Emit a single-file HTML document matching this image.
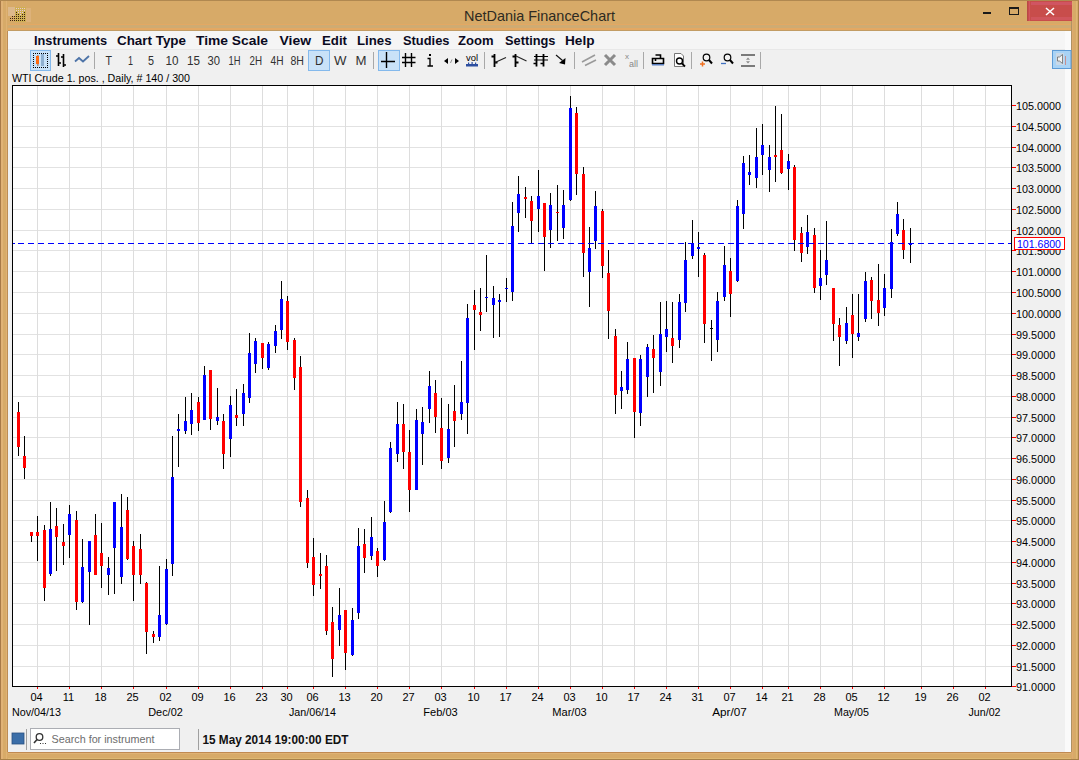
<!DOCTYPE html><html><head><meta charset="utf-8"><style>html,body{margin:0;padding:0;width:1079px;height:760px;overflow:hidden;background:#D7AA68}svg{display:block}text{font-family:"Liberation Sans",sans-serif}</style></head><body><svg width="1079" height="760" viewBox="0 0 1079 760"><rect x="0" y="0" width="1079" height="760" fill="#D7AA68"/><rect x="0" y="0" width="1" height="760" fill="#A87A48"/><rect x="1" y="0" width="2" height="760" fill="#E0B276"/><rect x="6" y="0" width="1" height="760" fill="#DFB274"/><rect x="7" y="31" width="1" height="721" fill="#BC8C55"/><rect x="1071" y="21" width="1" height="731" fill="#AE9262"/><rect x="1072" y="0" width="1" height="760" fill="#DEAA70"/><rect x="1076" y="0" width="1" height="760" fill="#DDB872"/><rect x="1078" y="0" width="1" height="760" fill="#A88048"/><rect x="0" y="0" width="1079" height="1" fill="#B08850"/><rect x="8" y="753" width="1063" height="1" fill="#DFB274"/><rect x="8" y="758" width="1063" height="1" fill="#DDB872"/><rect x="0" y="759" width="1079" height="1" fill="#A88048"/><rect x="8" y="24" width="1063" height="1" fill="#E4A862"/><rect x="8" y="25" width="1063" height="3" fill="#CFAB72"/><rect x="8" y="28" width="1063" height="2" fill="#E4A862"/><rect x="8" y="30" width="1063" height="1" fill="#C29C64"/><rect x="8" y="752" width="1063" height="1" fill="#C08A52"/><rect x="8" y="7" width="8" height="9" fill="#DDB98C"/><rect x="15" y="7" width="11" height="15" fill="#CFB055"/><rect x="26" y="8" width="5" height="14" fill="#DDB27A"/><rect x="10" y="18" width="1" height="1" fill="#3A2410"/><rect x="10" y="20" width="1" height="1" fill="#3A2410"/><rect x="12" y="16" width="1" height="1" fill="#3A2410"/><rect x="12" y="18" width="1" height="1" fill="#3A2410"/><rect x="12" y="20" width="1" height="1" fill="#3A2410"/><rect x="14" y="16" width="1" height="1" fill="#3A2410"/><rect x="14" y="18" width="1" height="1" fill="#3A2410"/><rect x="14" y="20" width="1" height="1" fill="#3A2410"/><rect x="16" y="12" width="1" height="1" fill="#3A2410"/><rect x="16" y="14" width="1" height="1" fill="#3A2410"/><rect x="16" y="16" width="1" height="1" fill="#3A2410"/><rect x="16" y="18" width="1" height="1" fill="#3A2410"/><rect x="16" y="20" width="1" height="1" fill="#3A2410"/><rect x="18" y="14" width="1" height="1" fill="#3A2410"/><rect x="18" y="16" width="1" height="1" fill="#3A2410"/><rect x="18" y="18" width="1" height="1" fill="#3A2410"/><rect x="18" y="20" width="1" height="1" fill="#3A2410"/><rect x="20" y="16" width="1" height="1" fill="#3A2410"/><rect x="20" y="18" width="1" height="1" fill="#3A2410"/><rect x="20" y="20" width="1" height="1" fill="#3A2410"/><rect x="22" y="14" width="1" height="1" fill="#3A2410"/><rect x="22" y="16" width="1" height="1" fill="#3A2410"/><rect x="22" y="18" width="1" height="1" fill="#3A2410"/><rect x="22" y="20" width="1" height="1" fill="#3A2410"/><rect x="24" y="12" width="1" height="1" fill="#3A2410"/><rect x="24" y="14" width="1" height="1" fill="#3A2410"/><rect x="24" y="16" width="1" height="1" fill="#3A2410"/><rect x="24" y="18" width="1" height="1" fill="#3A2410"/><rect x="24" y="20" width="1" height="1" fill="#3A2410"/><rect x="16" y="8" width="1" height="1" fill="#E8C8D8"/><rect x="16" y="10" width="1" height="1" fill="#E8C8D8"/><rect x="18" y="8" width="1" height="1" fill="#E8C8D8"/><rect x="18" y="10" width="1" height="1" fill="#E8C8D8"/><rect x="18" y="12" width="1" height="1" fill="#E8C8D8"/><rect x="20" y="8" width="1" height="1" fill="#E8C8D8"/><rect x="20" y="10" width="1" height="1" fill="#E8C8D8"/><rect x="20" y="12" width="1" height="1" fill="#E8C8D8"/><rect x="20" y="14" width="1" height="1" fill="#E8C8D8"/><rect x="22" y="8" width="1" height="1" fill="#E8C8D8"/><rect x="22" y="10" width="1" height="1" fill="#E8C8D8"/><rect x="22" y="12" width="1" height="1" fill="#E8C8D8"/><rect x="24" y="8" width="1" height="1" fill="#E8C8D8"/><rect x="24" y="10" width="1" height="1" fill="#E8C8D8"/><text x="539.5" y="20.5" font-size="14.5" fill="#2E2A22" text-anchor="middle" textLength="151" lengthAdjust="spacingAndGlyphs">NetDania FinanceChart</text><rect x="983" y="12" width="8" height="2" fill="#1a1a1a"/><rect x="1009.5" y="7.5" width="9" height="7" fill="none" stroke="#1a1a1a" stroke-width="1"/><rect x="1009" y="7" width="10" height="2" fill="#1a1a1a"/><rect x="1027" y="1" width="45" height="20" fill="#C84D4B"/><rect x="1031" y="2" width="41" height="3" fill="#D05562"/><rect x="1031" y="17" width="41" height="3" fill="#D0555C"/><rect x="1027" y="1" width="1" height="20" fill="#B84848"/><rect x="1029" y="1" width="1" height="20" fill="#D25660"/><path d="M1046 8 L1054 15 M1054 8 L1046 15" stroke="#fff" stroke-width="1.6"/><rect x="8" y="31" width="1063" height="721" fill="#F0F0F0"/><rect x="8" y="31" width="1057" height="18" fill="#F5F5F5"/><rect x="1065" y="31" width="6" height="721" fill="#FAFAFA"/><rect x="8" y="49" width="1057" height="1" fill="#E8E8E8"/><text x="34" y="45" font-size="13" font-weight="bold" fill="#0A0A1E" textLength="73" lengthAdjust="spacingAndGlyphs">Instruments</text><text x="117" y="45" font-size="13" font-weight="bold" fill="#0A0A1E" textLength="69" lengthAdjust="spacingAndGlyphs">Chart Type</text><text x="196" y="45" font-size="13" font-weight="bold" fill="#0A0A1E" textLength="72" lengthAdjust="spacingAndGlyphs">Time Scale</text><text x="279.5" y="45" font-size="13" font-weight="bold" fill="#0A0A1E" textLength="31.5" lengthAdjust="spacingAndGlyphs">View</text><text x="322" y="45" font-size="13" font-weight="bold" fill="#0A0A1E" textLength="25" lengthAdjust="spacingAndGlyphs">Edit</text><text x="357" y="45" font-size="13" font-weight="bold" fill="#0A0A1E" textLength="34.5" lengthAdjust="spacingAndGlyphs">Lines</text><text x="403" y="45" font-size="13" font-weight="bold" fill="#0A0A1E" textLength="46.5" lengthAdjust="spacingAndGlyphs">Studies</text><text x="458" y="45" font-size="13" font-weight="bold" fill="#0A0A1E" textLength="35.5" lengthAdjust="spacingAndGlyphs">Zoom</text><text x="505" y="45" font-size="13" font-weight="bold" fill="#0A0A1E" textLength="50.5" lengthAdjust="spacingAndGlyphs">Settings</text><text x="565" y="45" font-size="13" font-weight="bold" fill="#0A0A1E" textLength="29.5" lengthAdjust="spacingAndGlyphs">Help</text><rect x="30.5" y="50.5" width="20" height="20" fill="#C9E2F8" stroke="#84B9EC" stroke-width="1"/><rect x="33" y="53" width="1" height="1" fill="#000"/><rect x="33" y="67" width="1" height="1" fill="#000"/><rect x="33" y="53" width="1" height="1" fill="#000"/><rect x="47" y="53" width="1" height="1" fill="#000"/><rect x="35" y="53" width="1" height="1" fill="#000"/><rect x="35" y="67" width="1" height="1" fill="#000"/><rect x="33" y="55" width="1" height="1" fill="#000"/><rect x="47" y="55" width="1" height="1" fill="#000"/><rect x="37" y="53" width="1" height="1" fill="#000"/><rect x="37" y="67" width="1" height="1" fill="#000"/><rect x="33" y="57" width="1" height="1" fill="#000"/><rect x="47" y="57" width="1" height="1" fill="#000"/><rect x="39" y="53" width="1" height="1" fill="#000"/><rect x="39" y="67" width="1" height="1" fill="#000"/><rect x="33" y="59" width="1" height="1" fill="#000"/><rect x="47" y="59" width="1" height="1" fill="#000"/><rect x="41" y="53" width="1" height="1" fill="#000"/><rect x="41" y="67" width="1" height="1" fill="#000"/><rect x="33" y="61" width="1" height="1" fill="#000"/><rect x="47" y="61" width="1" height="1" fill="#000"/><rect x="43" y="53" width="1" height="1" fill="#000"/><rect x="43" y="67" width="1" height="1" fill="#000"/><rect x="33" y="63" width="1" height="1" fill="#000"/><rect x="47" y="63" width="1" height="1" fill="#000"/><rect x="45" y="53" width="1" height="1" fill="#000"/><rect x="45" y="67" width="1" height="1" fill="#000"/><rect x="33" y="65" width="1" height="1" fill="#000"/><rect x="47" y="65" width="1" height="1" fill="#000"/><rect x="47" y="53" width="1" height="1" fill="#000"/><rect x="47" y="67" width="1" height="1" fill="#000"/><rect x="33" y="67" width="1" height="1" fill="#000"/><rect x="47" y="67" width="1" height="1" fill="#000"/><rect x="37.5" y="55" width="0.8" height="11" fill="#8a3a10"/><rect x="36" y="56" width="3" height="8" fill="#FF6A10"/><rect x="41" y="54" width="3" height="12" fill="#8FB0D0"/><path d="M58.5 53 V66 M63.5 54 V67 M56 56 H58.5 M58.5 63 H61 M61 57 H63.5 M63.5 65 H66" stroke="#000" stroke-width="1.6" fill="none"/><path d="M75 61.5 L79 58 L83 61.5 L89 56" stroke="#4E74A8" stroke-width="1.8" fill="none"/><rect x="94" y="52" width="1" height="17" fill="#A8A8A8"/><rect x="308.5" y="50.5" width="21" height="20" fill="#C9E2F8" stroke="#84B9EC" stroke-width="1"/><text x="105.5" y="64.5" font-size="12.5" fill="#303030" textLength="6.5" lengthAdjust="spacingAndGlyphs">T</text><text x="128" y="64.5" font-size="12.5" fill="#303030" textLength="5" lengthAdjust="spacingAndGlyphs">1</text><text x="148" y="64.5" font-size="12.5" fill="#303030" textLength="6" lengthAdjust="spacingAndGlyphs">5</text><text x="165.5" y="64.5" font-size="12.5" fill="#303030" textLength="13" lengthAdjust="spacingAndGlyphs">10</text><text x="187" y="64.5" font-size="12.5" fill="#303030" textLength="13" lengthAdjust="spacingAndGlyphs">15</text><text x="207.5" y="64.5" font-size="12.5" fill="#303030" textLength="12.5" lengthAdjust="spacingAndGlyphs">30</text><text x="228.5" y="64.5" font-size="12.5" fill="#303030" textLength="12" lengthAdjust="spacingAndGlyphs">1H</text><text x="249.5" y="64.5" font-size="12.5" fill="#303030" textLength="12.5" lengthAdjust="spacingAndGlyphs">2H</text><text x="270.5" y="64.5" font-size="12.5" fill="#303030" textLength="13" lengthAdjust="spacingAndGlyphs">4H</text><text x="290.5" y="64.5" font-size="12.5" fill="#303030" textLength="13.5" lengthAdjust="spacingAndGlyphs">8H</text><text x="315" y="64.5" font-size="12.5" fill="#303030" textLength="8.5" lengthAdjust="spacingAndGlyphs">D</text><text x="334" y="64.5" font-size="12.5" fill="#303030" textLength="12.5" lengthAdjust="spacingAndGlyphs">W</text><text x="355.5" y="64.5" font-size="12.5" fill="#303030" textLength="11" lengthAdjust="spacingAndGlyphs">M</text><rect x="373" y="52" width="1" height="17" fill="#A8A8A8"/><rect x="378.5" y="50.5" width="21" height="20" fill="#C9E2F8" stroke="#84B9EC" stroke-width="1"/><path d="M381 61.5 H395 M386.5 52 V68" stroke="#000" stroke-width="1.4"/><path d="M405.5 53 V67 M411.5 53 V67 M402 57.5 H415.5 M402 62.5 H415.5" stroke="#000" stroke-width="1.4"/><rect x="429" y="54" width="2" height="2" fill="#000"/><path d="M427.5 58.5 H430 V66 M427.5 66 H433" stroke="#000" stroke-width="1.4" fill="none"/><path d="M444 61 L448 58 L448 64 Z M459 61 L455 58 L455 64 Z" fill="#000"/><path d="M450.5 63 L452 59.5" stroke="#777" stroke-width="0.8"/><text x="466" y="61" font-size="9.5" fill="#000" textLength="12" lengthAdjust="spacingAndGlyphs">vol</text><rect x="466" y="64" width="12" height="2.5" fill="#2D4FA0"/><rect x="468" y="62.5" width="1.2" height="1.5" fill="#2D4FA0"/><rect x="471.5" y="62" width="1.2" height="2" fill="#2D4FA0"/><rect x="475" y="62.5" width="1.2" height="1.5" fill="#2D4FA0"/><rect x="484" y="52" width="1" height="17" fill="#A8A8A8"/><path d="M494.5 54 V67 M491.5 56.5 H494.5 M494.5 62.5 H497.5 M536.5 54 V66.5 M543.5 54 V66.5" stroke="#000" stroke-width="1.8" fill="none"/><path d="M495 62.5 L506 57.5" stroke="#222" stroke-width="1.1" fill="none"/><path d="M515.5 54 V67 M512.5 56.5 H515.5 M515.5 62.5 H518.5" stroke="#000" stroke-width="1.8" fill="none"/><path d="M516 56 L526.5 61" stroke="#222" stroke-width="1.1" fill="none"/><path d="M534 56.5 H548 M534 60 H548" stroke="#000" stroke-width="1.2" fill="none"/><path d="M533.5 63.5 H536.5 M540.5 63.5 H543.5" stroke="#000" stroke-width="1.5" fill="none"/><path d="M556 55 L562.5 60.5" stroke="#111" stroke-width="1.1"/><path d="M565.5 58 L565 64.5 L559 63 Z" fill="#000"/><rect x="574" y="52" width="1" height="17" fill="#A8A8A8"/><path d="M582 62 L595 55 M585 65.5 L596 60" stroke="#9A9A9A" stroke-width="1.6"/><path d="M605 55 L615 65 M615 55 L605 65" stroke="#8A8A8A" stroke-width="3"/><text x="625" y="59" font-size="8" fill="#888">x</text><text x="629" y="66.5" font-size="9" fill="#888">all</text><rect x="643" y="52" width="1" height="17" fill="#A8A8A8"/><path d="M652.5 58.5 H663.5 V63.5 H652.5 Z M655.5 55 H660.5 V58.5 M655.5 58.5 V61" stroke="#000" stroke-width="1.6" fill="none"/><rect x="652" y="64" width="12" height="1.5" fill="#5A7EC0"/><path d="M674.5 53.5 H681 L683.5 56 V66.5 H674.5 Z" stroke="#777" stroke-width="1" fill="#fff"/><circle cx="679.5" cy="61" r="3" stroke="#000" stroke-width="1.4" fill="none"/><path d="M681.8 63.3 L685 66.5" stroke="#000" stroke-width="1.8"/><rect x="691" y="52" width="1" height="17" fill="#A8A8A8"/><circle cx="706.5" cy="57.5" r="3.3" stroke="#000" stroke-width="1.2" fill="none"/><path d="M709 60 L712 63.5" stroke="#000" stroke-width="2"/><path d="M700 64 H705 M702.5 61.5 V66.5" stroke="#F07020" stroke-width="1.5"/><circle cx="727.5" cy="57.5" r="3.3" stroke="#000" stroke-width="1.2" fill="none"/><path d="M730 60 L733 63.5" stroke="#000" stroke-width="2"/><path d="M721 63.5 H726" stroke="#4070C0" stroke-width="1.3"/><path d="M741 55 H755 M741 66 H755" stroke="#7A7A7A" stroke-width="1.8"/><path d="M748 57.5 L746 59.8 H750 Z M748 63.5 L746 61.2 H750 Z" fill="#8A8A8A"/><rect x="760" y="52" width="1" height="17" fill="#A8A8A8"/><rect x="1052.5" y="50.5" width="18.5" height="18" fill="#A9D3F5" stroke="#5C9BD6" stroke-width="1"/><rect x="1056" y="53" width="8" height="12" fill="#C9D9E8"/><path d="M1057.5 57 H1059.5 L1062.5 54.5 V63.5 L1059.5 61 H1057.5 Z" fill="#F4F4F4" stroke="#6A6A6A" stroke-width="0.8"/><rect x="1065" y="56" width="1" height="9" fill="#C89090"/><text x="12" y="81.5" font-size="11" fill="#000" textLength="178" lengthAdjust="spacingAndGlyphs">WTI Crude 1. pos. , Daily, # 140 / 300</text><rect x="12" y="85" width="999" height="601" fill="#FFFFFF"/><rect x="13" y="105" width="998" height="1" fill="#E2E2E2"/><rect x="13" y="126" width="998" height="1" fill="#E2E2E2"/><rect x="13" y="147" width="998" height="1" fill="#E2E2E2"/><rect x="13" y="167" width="998" height="1" fill="#E2E2E2"/><rect x="13" y="188" width="998" height="1" fill="#E2E2E2"/><rect x="13" y="209" width="998" height="1" fill="#E2E2E2"/><rect x="13" y="230" width="998" height="1" fill="#E2E2E2"/><rect x="13" y="250" width="998" height="1" fill="#E2E2E2"/><rect x="13" y="271" width="998" height="1" fill="#E2E2E2"/><rect x="13" y="292" width="998" height="1" fill="#E2E2E2"/><rect x="13" y="313" width="998" height="1" fill="#E2E2E2"/><rect x="13" y="334" width="998" height="1" fill="#E2E2E2"/><rect x="13" y="354" width="998" height="1" fill="#E2E2E2"/><rect x="13" y="375" width="998" height="1" fill="#E2E2E2"/><rect x="13" y="396" width="998" height="1" fill="#E2E2E2"/><rect x="13" y="417" width="998" height="1" fill="#E2E2E2"/><rect x="13" y="437" width="998" height="1" fill="#E2E2E2"/><rect x="13" y="458" width="998" height="1" fill="#E2E2E2"/><rect x="13" y="479" width="998" height="1" fill="#E2E2E2"/><rect x="13" y="500" width="998" height="1" fill="#E2E2E2"/><rect x="13" y="520" width="998" height="1" fill="#E2E2E2"/><rect x="13" y="541" width="998" height="1" fill="#E2E2E2"/><rect x="13" y="562" width="998" height="1" fill="#E2E2E2"/><rect x="13" y="583" width="998" height="1" fill="#E2E2E2"/><rect x="13" y="603" width="998" height="1" fill="#E2E2E2"/><rect x="13" y="624" width="998" height="1" fill="#E2E2E2"/><rect x="13" y="645" width="998" height="1" fill="#E2E2E2"/><rect x="13" y="666" width="998" height="1" fill="#E2E2E2"/><rect x="37" y="86" width="1" height="600" fill="#DDDDDD"/><rect x="69" y="86" width="1" height="600" fill="#DDDDDD"/><rect x="101" y="86" width="1" height="600" fill="#DDDDDD"/><rect x="133" y="86" width="1" height="600" fill="#DDDDDD"/><rect x="166" y="86" width="1" height="600" fill="#DDDDDD"/><rect x="198" y="86" width="1" height="600" fill="#DDDDDD"/><rect x="230" y="86" width="1" height="600" fill="#DDDDDD"/><rect x="262" y="86" width="1" height="600" fill="#DDDDDD"/><rect x="287" y="86" width="1" height="600" fill="#DDDDDD"/><rect x="313" y="86" width="1" height="600" fill="#DDDDDD"/><rect x="345" y="86" width="1" height="600" fill="#DDDDDD"/><rect x="377" y="86" width="1" height="600" fill="#DDDDDD"/><rect x="409" y="86" width="1" height="600" fill="#DDDDDD"/><rect x="441" y="86" width="1" height="600" fill="#DDDDDD"/><rect x="474" y="86" width="1" height="600" fill="#DDDDDD"/><rect x="506" y="86" width="1" height="600" fill="#DDDDDD"/><rect x="538" y="86" width="1" height="600" fill="#DDDDDD"/><rect x="570" y="86" width="1" height="600" fill="#DDDDDD"/><rect x="602" y="86" width="1" height="600" fill="#DDDDDD"/><rect x="634" y="86" width="1" height="600" fill="#DDDDDD"/><rect x="666" y="86" width="1" height="600" fill="#DDDDDD"/><rect x="698" y="86" width="1" height="600" fill="#DDDDDD"/><rect x="730" y="86" width="1" height="600" fill="#DDDDDD"/><rect x="762" y="86" width="1" height="600" fill="#DDDDDD"/><rect x="788" y="86" width="1" height="600" fill="#DDDDDD"/><rect x="820" y="86" width="1" height="600" fill="#DDDDDD"/><rect x="852" y="86" width="1" height="600" fill="#DDDDDD"/><rect x="884" y="86" width="1" height="600" fill="#DDDDDD"/><rect x="921" y="86" width="1" height="600" fill="#DDDDDD"/><rect x="953" y="86" width="1" height="600" fill="#DDDDDD"/><rect x="985" y="86" width="1" height="600" fill="#DDDDDD"/><rect x="18" y="402" width="1" height="54" fill="#000"/><rect x="17" y="412" width="3" height="35" fill="#FF0000"/><rect x="24" y="436" width="1" height="43" fill="#000"/><rect x="23" y="456" width="3" height="12" fill="#FF0000"/><rect x="31" y="532" width="1" height="10" fill="#000"/><rect x="30" y="532" width="3" height="4" fill="#FF0000"/><rect x="37" y="516" width="1" height="45" fill="#000"/><rect x="36" y="532" width="3" height="4" fill="#FF0000"/><rect x="44" y="525" width="1" height="76" fill="#000"/><rect x="43" y="530" width="3" height="58" fill="#FF0000"/><rect x="50" y="502" width="1" height="74" fill="#000"/><rect x="49" y="529" width="3" height="45" fill="#0000FF"/><rect x="56" y="508" width="1" height="63" fill="#000"/><rect x="55" y="526" width="3" height="11" fill="#FF0000"/><rect x="63" y="524" width="1" height="41" fill="#000"/><rect x="62" y="542" width="3" height="4" fill="#FF0000"/><rect x="69" y="505" width="1" height="53" fill="#000"/><rect x="68" y="514" width="3" height="21" fill="#0000FF"/><rect x="76" y="511" width="1" height="99" fill="#000"/><rect x="75" y="520" width="3" height="82" fill="#FF0000"/><rect x="82" y="539" width="1" height="64" fill="#000"/><rect x="81" y="567" width="3" height="35" fill="#0000FF"/><rect x="89" y="541" width="1" height="84" fill="#000"/><rect x="88" y="541" width="3" height="31" fill="#0000FF"/><rect x="95" y="514" width="1" height="61" fill="#000"/><rect x="94" y="535" width="3" height="40" fill="#FF0000"/><rect x="101" y="523" width="1" height="65" fill="#000"/><rect x="100" y="553" width="3" height="13" fill="#FF0000"/><rect x="108" y="557" width="1" height="38" fill="#000"/><rect x="107" y="568" width="3" height="7" fill="#0000FF"/><rect x="114" y="502" width="1" height="92" fill="#000"/><rect x="113" y="502" width="3" height="46" fill="#0000FF"/><rect x="121" y="494" width="1" height="90" fill="#000"/><rect x="120" y="527" width="3" height="50" fill="#0000FF"/><rect x="127" y="497" width="1" height="63" fill="#000"/><rect x="126" y="510" width="3" height="49" fill="#FF0000"/><rect x="133" y="541" width="1" height="60" fill="#000"/><rect x="132" y="546" width="3" height="29" fill="#FF0000"/><rect x="140" y="534" width="1" height="50" fill="#000"/><rect x="139" y="549" width="3" height="26" fill="#FF0000"/><rect x="146" y="582" width="1" height="72" fill="#000"/><rect x="145" y="583" width="3" height="49" fill="#FF0000"/><rect x="153" y="631" width="1" height="12" fill="#000"/><rect x="152" y="634" width="3" height="3" fill="#FF0000"/><rect x="159" y="566" width="1" height="75" fill="#000"/><rect x="158" y="615" width="3" height="22" fill="#0000FF"/><rect x="166" y="559" width="1" height="66" fill="#000"/><rect x="165" y="569" width="3" height="55" fill="#0000FF"/><rect x="172" y="436" width="1" height="140" fill="#000"/><rect x="171" y="477" width="3" height="87" fill="#0000FF"/><rect x="178" y="414" width="1" height="53" fill="#000"/><rect x="177" y="429" width="3" height="2" fill="#0000FF"/><rect x="185" y="397" width="1" height="37" fill="#000"/><rect x="184" y="421" width="3" height="10" fill="#0000FF"/><rect x="191" y="393" width="1" height="42" fill="#000"/><rect x="190" y="410" width="3" height="14" fill="#0000FF"/><rect x="198" y="397" width="1" height="34" fill="#000"/><rect x="197" y="402" width="3" height="21" fill="#FF0000"/><rect x="204" y="366" width="1" height="54" fill="#000"/><rect x="203" y="375" width="3" height="45" fill="#0000FF"/><rect x="210" y="370" width="1" height="60" fill="#000"/><rect x="209" y="370" width="3" height="49" fill="#FF0000"/><rect x="217" y="388" width="1" height="37" fill="#000"/><rect x="216" y="417" width="3" height="4" fill="#0000FF"/><rect x="223" y="414" width="1" height="55" fill="#000"/><rect x="222" y="421" width="3" height="33" fill="#FF0000"/><rect x="230" y="396" width="1" height="61" fill="#000"/><rect x="229" y="405" width="3" height="34" fill="#0000FF"/><rect x="236" y="389" width="1" height="37" fill="#000"/><rect x="235" y="415" width="3" height="3" fill="#FF0000"/><rect x="243" y="384" width="1" height="42" fill="#000"/><rect x="242" y="393" width="3" height="21" fill="#0000FF"/><rect x="249" y="333" width="1" height="70" fill="#000"/><rect x="248" y="353" width="3" height="45" fill="#0000FF"/><rect x="255" y="338" width="1" height="35" fill="#000"/><rect x="254" y="341" width="3" height="23" fill="#0000FF"/><rect x="262" y="343" width="1" height="26" fill="#000"/><rect x="261" y="343" width="3" height="15" fill="#FF0000"/><rect x="268" y="342" width="1" height="28" fill="#000"/><rect x="267" y="344" width="3" height="24" fill="#0000FF"/><rect x="275" y="325" width="1" height="28" fill="#000"/><rect x="274" y="331" width="3" height="15" fill="#0000FF"/><rect x="281" y="281" width="1" height="58" fill="#000"/><rect x="280" y="299" width="3" height="31" fill="#0000FF"/><rect x="287" y="296" width="1" height="54" fill="#000"/><rect x="286" y="301" width="3" height="41" fill="#FF0000"/><rect x="294" y="338" width="1" height="52" fill="#000"/><rect x="293" y="340" width="3" height="38" fill="#FF0000"/><rect x="300" y="356" width="1" height="151" fill="#000"/><rect x="299" y="367" width="3" height="135" fill="#FF0000"/><rect x="307" y="490" width="1" height="78" fill="#000"/><rect x="306" y="498" width="3" height="65" fill="#FF0000"/><rect x="313" y="538" width="1" height="58" fill="#000"/><rect x="312" y="557" width="3" height="28" fill="#FF0000"/><rect x="320" y="553" width="1" height="36" fill="#000"/><rect x="319" y="574" width="3" height="2" fill="#FF0000"/><rect x="326" y="555" width="1" height="80" fill="#000"/><rect x="325" y="566" width="3" height="65" fill="#FF0000"/><rect x="332" y="607" width="1" height="70" fill="#000"/><rect x="331" y="622" width="3" height="37" fill="#FF0000"/><rect x="339" y="588" width="1" height="58" fill="#000"/><rect x="338" y="615" width="3" height="15" fill="#0000FF"/><rect x="345" y="610" width="1" height="60" fill="#000"/><rect x="344" y="610" width="3" height="43" fill="#FF0000"/><rect x="352" y="608" width="1" height="48" fill="#000"/><rect x="351" y="620" width="3" height="35" fill="#0000FF"/><rect x="358" y="528" width="1" height="91" fill="#000"/><rect x="357" y="546" width="3" height="67" fill="#0000FF"/><rect x="364" y="529" width="1" height="44" fill="#000"/><rect x="363" y="544" width="3" height="14" fill="#FF0000"/><rect x="371" y="517" width="1" height="43" fill="#000"/><rect x="370" y="537" width="3" height="19" fill="#0000FF"/><rect x="377" y="548" width="1" height="29" fill="#000"/><rect x="376" y="551" width="3" height="15" fill="#FF0000"/><rect x="384" y="501" width="1" height="60" fill="#000"/><rect x="383" y="522" width="3" height="38" fill="#0000FF"/><rect x="390" y="442" width="1" height="71" fill="#000"/><rect x="389" y="448" width="3" height="64" fill="#0000FF"/><rect x="397" y="402" width="1" height="60" fill="#000"/><rect x="396" y="424" width="3" height="30" fill="#0000FF"/><rect x="403" y="404" width="1" height="65" fill="#000"/><rect x="402" y="424" width="3" height="28" fill="#FF0000"/><rect x="409" y="430" width="1" height="82" fill="#000"/><rect x="408" y="452" width="3" height="38" fill="#FF0000"/><rect x="416" y="409" width="1" height="81" fill="#000"/><rect x="415" y="420" width="3" height="70" fill="#0000FF"/><rect x="422" y="407" width="1" height="58" fill="#000"/><rect x="421" y="422" width="3" height="12" fill="#0000FF"/><rect x="429" y="371" width="1" height="52" fill="#000"/><rect x="428" y="386" width="3" height="23" fill="#0000FF"/><rect x="435" y="380" width="1" height="53" fill="#000"/><rect x="434" y="393" width="3" height="24" fill="#FF0000"/><rect x="441" y="398" width="1" height="71" fill="#000"/><rect x="440" y="428" width="3" height="33" fill="#FF0000"/><rect x="448" y="404" width="1" height="59" fill="#000"/><rect x="447" y="429" width="3" height="29" fill="#0000FF"/><rect x="454" y="385" width="1" height="62" fill="#000"/><rect x="453" y="411" width="3" height="10" fill="#FF0000"/><rect x="461" y="361" width="1" height="59" fill="#000"/><rect x="460" y="402" width="3" height="12" fill="#0000FF"/><rect x="467" y="304" width="1" height="130" fill="#000"/><rect x="466" y="318" width="3" height="85" fill="#0000FF"/><rect x="474" y="290" width="1" height="60" fill="#000"/><rect x="473" y="305" width="3" height="5" fill="#FF0000"/><rect x="480" y="288" width="1" height="43" fill="#000"/><rect x="479" y="312" width="3" height="3" fill="#FF0000"/><rect x="486" y="255" width="1" height="57" fill="#000"/><rect x="485" y="297" width="3" height="1" fill="#0000FF"/><rect x="493" y="286" width="1" height="52" fill="#000"/><rect x="492" y="298" width="3" height="7" fill="#0000FF"/><rect x="499" y="294" width="1" height="43" fill="#000"/><rect x="498" y="300" width="3" height="2" fill="#0000FF"/><rect x="506" y="278" width="1" height="24" fill="#000"/><rect x="505" y="288" width="3" height="1" fill="#0000FF"/><rect x="512" y="202" width="1" height="99" fill="#000"/><rect x="511" y="226" width="3" height="66" fill="#0000FF"/><rect x="518" y="176" width="1" height="56" fill="#000"/><rect x="517" y="194" width="3" height="19" fill="#0000FF"/><rect x="525" y="187" width="1" height="31" fill="#000"/><rect x="524" y="197" width="3" height="2" fill="#FF0000"/><rect x="531" y="196" width="1" height="47" fill="#000"/><rect x="530" y="201" width="3" height="20" fill="#FF0000"/><rect x="538" y="170" width="1" height="62" fill="#000"/><rect x="537" y="196" width="3" height="13" fill="#0000FF"/><rect x="544" y="203" width="1" height="68" fill="#000"/><rect x="543" y="203" width="3" height="34" fill="#FF0000"/><rect x="550" y="193" width="1" height="55" fill="#000"/><rect x="549" y="205" width="3" height="25" fill="#0000FF"/><rect x="557" y="185" width="1" height="56" fill="#000"/><rect x="556" y="212" width="3" height="1" fill="#FF0000"/><rect x="563" y="190" width="1" height="49" fill="#000"/><rect x="562" y="205" width="3" height="23" fill="#0000FF"/><rect x="570" y="96" width="1" height="105" fill="#000"/><rect x="569" y="108" width="3" height="92" fill="#0000FF"/><rect x="576" y="107" width="1" height="88" fill="#000"/><rect x="575" y="113" width="3" height="61" fill="#FF0000"/><rect x="583" y="167" width="1" height="110" fill="#000"/><rect x="582" y="174" width="3" height="79" fill="#FF0000"/><rect x="589" y="227" width="1" height="80" fill="#000"/><rect x="588" y="248" width="3" height="24" fill="#0000FF"/><rect x="595" y="191" width="1" height="58" fill="#000"/><rect x="594" y="206" width="3" height="35" fill="#0000FF"/><rect x="602" y="209" width="1" height="69" fill="#000"/><rect x="601" y="211" width="3" height="55" fill="#FF0000"/><rect x="608" y="250" width="1" height="89" fill="#000"/><rect x="607" y="273" width="3" height="38" fill="#FF0000"/><rect x="615" y="329" width="1" height="85" fill="#000"/><rect x="614" y="336" width="3" height="59" fill="#FF0000"/><rect x="621" y="371" width="1" height="38" fill="#000"/><rect x="620" y="387" width="3" height="4" fill="#0000FF"/><rect x="627" y="342" width="1" height="52" fill="#000"/><rect x="626" y="359" width="3" height="31" fill="#0000FF"/><rect x="634" y="358" width="1" height="80" fill="#000"/><rect x="633" y="358" width="3" height="54" fill="#FF0000"/><rect x="640" y="355" width="1" height="71" fill="#000"/><rect x="639" y="359" width="3" height="54" fill="#0000FF"/><rect x="647" y="344" width="1" height="53" fill="#000"/><rect x="646" y="347" width="3" height="30" fill="#0000FF"/><rect x="653" y="335" width="1" height="58" fill="#000"/><rect x="652" y="349" width="3" height="9" fill="#FF0000"/><rect x="660" y="302" width="1" height="84" fill="#000"/><rect x="659" y="334" width="3" height="38" fill="#0000FF"/><rect x="666" y="301" width="1" height="51" fill="#000"/><rect x="665" y="329" width="3" height="8" fill="#0000FF"/><rect x="672" y="302" width="1" height="61" fill="#000"/><rect x="671" y="338" width="3" height="8" fill="#FF0000"/><rect x="679" y="294" width="1" height="54" fill="#000"/><rect x="678" y="302" width="3" height="38" fill="#0000FF"/><rect x="685" y="242" width="1" height="70" fill="#000"/><rect x="684" y="260" width="3" height="43" fill="#0000FF"/><rect x="692" y="220" width="1" height="39" fill="#000"/><rect x="691" y="243" width="3" height="13" fill="#0000FF"/><rect x="698" y="232" width="1" height="45" fill="#000"/><rect x="697" y="247" width="3" height="2" fill="#0000FF"/><rect x="704" y="253" width="1" height="90" fill="#000"/><rect x="703" y="255" width="3" height="69" fill="#FF0000"/><rect x="711" y="320" width="1" height="41" fill="#000"/><rect x="710" y="328" width="3" height="1" fill="#000000"/><rect x="717" y="292" width="1" height="60" fill="#000"/><rect x="716" y="301" width="3" height="39" fill="#0000FF"/><rect x="724" y="246" width="1" height="55" fill="#000"/><rect x="723" y="265" width="3" height="32" fill="#0000FF"/><rect x="730" y="258" width="1" height="59" fill="#000"/><rect x="729" y="271" width="3" height="23" fill="#FF0000"/><rect x="737" y="200" width="1" height="82" fill="#000"/><rect x="736" y="206" width="3" height="75" fill="#0000FF"/><rect x="743" y="156" width="1" height="73" fill="#000"/><rect x="742" y="163" width="3" height="51" fill="#0000FF"/><rect x="749" y="155" width="1" height="30" fill="#000"/><rect x="748" y="172" width="3" height="3" fill="#0000FF"/><rect x="756" y="128" width="1" height="60" fill="#000"/><rect x="755" y="157" width="3" height="21" fill="#0000FF"/><rect x="762" y="124" width="1" height="51" fill="#000"/><rect x="761" y="145" width="3" height="10" fill="#0000FF"/><rect x="769" y="145" width="1" height="47" fill="#000"/><rect x="768" y="157" width="3" height="13" fill="#0000FF"/><rect x="775" y="106" width="1" height="76" fill="#000"/><rect x="774" y="155" width="3" height="2" fill="#FF0000"/><rect x="781" y="114" width="1" height="60" fill="#000"/><rect x="780" y="150" width="3" height="23" fill="#FF0000"/><rect x="788" y="154" width="1" height="36" fill="#000"/><rect x="787" y="161" width="3" height="8" fill="#0000FF"/><rect x="794" y="165" width="1" height="86" fill="#000"/><rect x="793" y="167" width="3" height="73" fill="#FF0000"/><rect x="801" y="227" width="1" height="35" fill="#000"/><rect x="800" y="233" width="3" height="20" fill="#FF0000"/><rect x="807" y="215" width="1" height="39" fill="#000"/><rect x="806" y="232" width="3" height="15" fill="#0000FF"/><rect x="814" y="228" width="1" height="65" fill="#000"/><rect x="813" y="235" width="3" height="53" fill="#FF0000"/><rect x="820" y="250" width="1" height="50" fill="#000"/><rect x="819" y="278" width="3" height="8" fill="#0000FF"/><rect x="826" y="221" width="1" height="64" fill="#000"/><rect x="825" y="260" width="3" height="15" fill="#0000FF"/><rect x="833" y="288" width="1" height="53" fill="#000"/><rect x="832" y="288" width="3" height="36" fill="#FF0000"/><rect x="839" y="318" width="1" height="48" fill="#000"/><rect x="838" y="325" width="3" height="12" fill="#FF0000"/><rect x="846" y="307" width="1" height="37" fill="#000"/><rect x="845" y="323" width="3" height="18" fill="#0000FF"/><rect x="852" y="294" width="1" height="64" fill="#000"/><rect x="851" y="315" width="3" height="19" fill="#FF0000"/><rect x="858" y="294" width="1" height="47" fill="#000"/><rect x="857" y="333" width="3" height="4" fill="#0000FF"/><rect x="865" y="272" width="1" height="50" fill="#000"/><rect x="864" y="281" width="3" height="38" fill="#0000FF"/><rect x="871" y="277" width="1" height="42" fill="#000"/><rect x="870" y="280" width="3" height="21" fill="#FF0000"/><rect x="878" y="264" width="1" height="62" fill="#000"/><rect x="877" y="300" width="3" height="13" fill="#FF0000"/><rect x="884" y="274" width="1" height="42" fill="#000"/><rect x="883" y="288" width="3" height="20" fill="#0000FF"/><rect x="891" y="229" width="1" height="69" fill="#000"/><rect x="890" y="242" width="3" height="47" fill="#0000FF"/><rect x="897" y="202" width="1" height="34" fill="#000"/><rect x="896" y="214" width="3" height="20" fill="#0000FF"/><rect x="903" y="219" width="1" height="40" fill="#000"/><rect x="902" y="230" width="3" height="20" fill="#FF0000"/><rect x="910" y="228" width="1" height="35" fill="#000"/><rect x="909" y="243" width="3" height="2" fill="#0000FF"/><rect x="13" y="243" width="2" height="1" fill="#0000FF"/><rect x="18" y="243" width="6" height="1" fill="#0000FF"/><rect x="28" y="243" width="6" height="1" fill="#0000FF"/><rect x="38" y="243" width="6" height="1" fill="#0000FF"/><rect x="48" y="243" width="6" height="1" fill="#0000FF"/><rect x="58" y="243" width="6" height="1" fill="#0000FF"/><rect x="68" y="243" width="6" height="1" fill="#0000FF"/><rect x="78" y="243" width="6" height="1" fill="#0000FF"/><rect x="88" y="243" width="6" height="1" fill="#0000FF"/><rect x="98" y="243" width="6" height="1" fill="#0000FF"/><rect x="108" y="243" width="6" height="1" fill="#0000FF"/><rect x="118" y="243" width="6" height="1" fill="#0000FF"/><rect x="128" y="243" width="6" height="1" fill="#0000FF"/><rect x="138" y="243" width="6" height="1" fill="#0000FF"/><rect x="148" y="243" width="6" height="1" fill="#0000FF"/><rect x="158" y="243" width="6" height="1" fill="#0000FF"/><rect x="168" y="243" width="6" height="1" fill="#0000FF"/><rect x="178" y="243" width="6" height="1" fill="#0000FF"/><rect x="188" y="243" width="6" height="1" fill="#0000FF"/><rect x="198" y="243" width="6" height="1" fill="#0000FF"/><rect x="208" y="243" width="6" height="1" fill="#0000FF"/><rect x="218" y="243" width="6" height="1" fill="#0000FF"/><rect x="228" y="243" width="6" height="1" fill="#0000FF"/><rect x="238" y="243" width="6" height="1" fill="#0000FF"/><rect x="248" y="243" width="6" height="1" fill="#0000FF"/><rect x="258" y="243" width="6" height="1" fill="#0000FF"/><rect x="268" y="243" width="6" height="1" fill="#0000FF"/><rect x="278" y="243" width="6" height="1" fill="#0000FF"/><rect x="288" y="243" width="6" height="1" fill="#0000FF"/><rect x="298" y="243" width="6" height="1" fill="#0000FF"/><rect x="308" y="243" width="6" height="1" fill="#0000FF"/><rect x="318" y="243" width="6" height="1" fill="#0000FF"/><rect x="328" y="243" width="6" height="1" fill="#0000FF"/><rect x="338" y="243" width="6" height="1" fill="#0000FF"/><rect x="348" y="243" width="6" height="1" fill="#0000FF"/><rect x="358" y="243" width="6" height="1" fill="#0000FF"/><rect x="368" y="243" width="6" height="1" fill="#0000FF"/><rect x="378" y="243" width="6" height="1" fill="#0000FF"/><rect x="388" y="243" width="6" height="1" fill="#0000FF"/><rect x="398" y="243" width="6" height="1" fill="#0000FF"/><rect x="408" y="243" width="6" height="1" fill="#0000FF"/><rect x="418" y="243" width="6" height="1" fill="#0000FF"/><rect x="428" y="243" width="6" height="1" fill="#0000FF"/><rect x="438" y="243" width="6" height="1" fill="#0000FF"/><rect x="448" y="243" width="6" height="1" fill="#0000FF"/><rect x="458" y="243" width="6" height="1" fill="#0000FF"/><rect x="468" y="243" width="6" height="1" fill="#0000FF"/><rect x="478" y="243" width="6" height="1" fill="#0000FF"/><rect x="488" y="243" width="6" height="1" fill="#0000FF"/><rect x="498" y="243" width="6" height="1" fill="#0000FF"/><rect x="508" y="243" width="6" height="1" fill="#0000FF"/><rect x="518" y="243" width="6" height="1" fill="#0000FF"/><rect x="528" y="243" width="6" height="1" fill="#0000FF"/><rect x="538" y="243" width="6" height="1" fill="#0000FF"/><rect x="548" y="243" width="6" height="1" fill="#0000FF"/><rect x="558" y="243" width="6" height="1" fill="#0000FF"/><rect x="568" y="243" width="6" height="1" fill="#0000FF"/><rect x="578" y="243" width="6" height="1" fill="#0000FF"/><rect x="588" y="243" width="6" height="1" fill="#0000FF"/><rect x="598" y="243" width="6" height="1" fill="#0000FF"/><rect x="608" y="243" width="6" height="1" fill="#0000FF"/><rect x="618" y="243" width="6" height="1" fill="#0000FF"/><rect x="628" y="243" width="6" height="1" fill="#0000FF"/><rect x="638" y="243" width="6" height="1" fill="#0000FF"/><rect x="648" y="243" width="6" height="1" fill="#0000FF"/><rect x="658" y="243" width="6" height="1" fill="#0000FF"/><rect x="668" y="243" width="6" height="1" fill="#0000FF"/><rect x="678" y="243" width="6" height="1" fill="#0000FF"/><rect x="688" y="243" width="6" height="1" fill="#0000FF"/><rect x="698" y="243" width="6" height="1" fill="#0000FF"/><rect x="708" y="243" width="6" height="1" fill="#0000FF"/><rect x="718" y="243" width="6" height="1" fill="#0000FF"/><rect x="728" y="243" width="6" height="1" fill="#0000FF"/><rect x="738" y="243" width="6" height="1" fill="#0000FF"/><rect x="748" y="243" width="6" height="1" fill="#0000FF"/><rect x="758" y="243" width="6" height="1" fill="#0000FF"/><rect x="768" y="243" width="6" height="1" fill="#0000FF"/><rect x="778" y="243" width="6" height="1" fill="#0000FF"/><rect x="788" y="243" width="6" height="1" fill="#0000FF"/><rect x="798" y="243" width="6" height="1" fill="#0000FF"/><rect x="808" y="243" width="6" height="1" fill="#0000FF"/><rect x="818" y="243" width="6" height="1" fill="#0000FF"/><rect x="828" y="243" width="6" height="1" fill="#0000FF"/><rect x="838" y="243" width="6" height="1" fill="#0000FF"/><rect x="848" y="243" width="6" height="1" fill="#0000FF"/><rect x="858" y="243" width="6" height="1" fill="#0000FF"/><rect x="868" y="243" width="6" height="1" fill="#0000FF"/><rect x="878" y="243" width="6" height="1" fill="#0000FF"/><rect x="888" y="243" width="6" height="1" fill="#0000FF"/><rect x="898" y="243" width="6" height="1" fill="#0000FF"/><rect x="908" y="243" width="6" height="1" fill="#0000FF"/><rect x="918" y="243" width="6" height="1" fill="#0000FF"/><rect x="928" y="243" width="6" height="1" fill="#0000FF"/><rect x="938" y="243" width="6" height="1" fill="#0000FF"/><rect x="948" y="243" width="6" height="1" fill="#0000FF"/><rect x="958" y="243" width="6" height="1" fill="#0000FF"/><rect x="968" y="243" width="6" height="1" fill="#0000FF"/><rect x="978" y="243" width="6" height="1" fill="#0000FF"/><rect x="988" y="243" width="6" height="1" fill="#0000FF"/><rect x="998" y="243" width="6" height="1" fill="#0000FF"/><rect x="1008" y="243" width="3" height="1" fill="#0000FF"/><rect x="12" y="85" width="1000" height="1" fill="#000"/><rect x="12" y="686" width="1000" height="1" fill="#000"/><rect x="12" y="85" width="1" height="602" fill="#000"/><rect x="1011" y="85" width="1" height="602" fill="#000"/><rect x="1012" y="105" width="4" height="1" fill="#FF0000"/><text x="1016" y="109.5" font-size="11" fill="#000" textLength="45" lengthAdjust="spacingAndGlyphs">105.0000</text><rect x="1012" y="126" width="4" height="1" fill="#FF0000"/><text x="1016" y="130.5" font-size="11" fill="#000" textLength="45" lengthAdjust="spacingAndGlyphs">104.5000</text><rect x="1012" y="147" width="4" height="1" fill="#FF0000"/><text x="1016" y="151.5" font-size="11" fill="#000" textLength="45" lengthAdjust="spacingAndGlyphs">104.0000</text><rect x="1012" y="167" width="4" height="1" fill="#FF0000"/><text x="1016" y="171.5" font-size="11" fill="#000" textLength="45" lengthAdjust="spacingAndGlyphs">103.5000</text><rect x="1012" y="188" width="4" height="1" fill="#FF0000"/><text x="1016" y="192.5" font-size="11" fill="#000" textLength="45" lengthAdjust="spacingAndGlyphs">103.0000</text><rect x="1012" y="209" width="4" height="1" fill="#FF0000"/><text x="1016" y="213.5" font-size="11" fill="#000" textLength="45" lengthAdjust="spacingAndGlyphs">102.5000</text><rect x="1012" y="230" width="4" height="1" fill="#FF0000"/><text x="1016" y="234.5" font-size="11" fill="#000" textLength="45" lengthAdjust="spacingAndGlyphs">102.0000</text><rect x="1012" y="250" width="4" height="1" fill="#FF0000"/><text x="1016" y="254.5" font-size="11" fill="#000" textLength="45" lengthAdjust="spacingAndGlyphs">101.5000</text><rect x="1012" y="271" width="4" height="1" fill="#FF0000"/><text x="1016" y="275.5" font-size="11" fill="#000" textLength="45" lengthAdjust="spacingAndGlyphs">101.0000</text><rect x="1012" y="292" width="4" height="1" fill="#FF0000"/><text x="1016" y="296.5" font-size="11" fill="#000" textLength="45" lengthAdjust="spacingAndGlyphs">100.5000</text><rect x="1012" y="313" width="4" height="1" fill="#FF0000"/><text x="1016" y="317.5" font-size="11" fill="#000" textLength="45" lengthAdjust="spacingAndGlyphs">100.0000</text><rect x="1012" y="334" width="4" height="1" fill="#FF0000"/><text x="1016" y="338.5" font-size="11" fill="#000" textLength="39.3" lengthAdjust="spacingAndGlyphs">99.5000</text><rect x="1012" y="354" width="4" height="1" fill="#FF0000"/><text x="1016" y="358.5" font-size="11" fill="#000" textLength="39.3" lengthAdjust="spacingAndGlyphs">99.0000</text><rect x="1012" y="375" width="4" height="1" fill="#FF0000"/><text x="1016" y="379.5" font-size="11" fill="#000" textLength="39.3" lengthAdjust="spacingAndGlyphs">98.5000</text><rect x="1012" y="396" width="4" height="1" fill="#FF0000"/><text x="1016" y="400.5" font-size="11" fill="#000" textLength="39.3" lengthAdjust="spacingAndGlyphs">98.0000</text><rect x="1012" y="417" width="4" height="1" fill="#FF0000"/><text x="1016" y="421.5" font-size="11" fill="#000" textLength="39.3" lengthAdjust="spacingAndGlyphs">97.5000</text><rect x="1012" y="437" width="4" height="1" fill="#FF0000"/><text x="1016" y="441.5" font-size="11" fill="#000" textLength="39.3" lengthAdjust="spacingAndGlyphs">97.0000</text><rect x="1012" y="458" width="4" height="1" fill="#FF0000"/><text x="1016" y="462.5" font-size="11" fill="#000" textLength="39.3" lengthAdjust="spacingAndGlyphs">96.5000</text><rect x="1012" y="479" width="4" height="1" fill="#FF0000"/><text x="1016" y="483.5" font-size="11" fill="#000" textLength="39.3" lengthAdjust="spacingAndGlyphs">96.0000</text><rect x="1012" y="500" width="4" height="1" fill="#FF0000"/><text x="1016" y="504.5" font-size="11" fill="#000" textLength="39.3" lengthAdjust="spacingAndGlyphs">95.5000</text><rect x="1012" y="520" width="4" height="1" fill="#FF0000"/><text x="1016" y="524.5" font-size="11" fill="#000" textLength="39.3" lengthAdjust="spacingAndGlyphs">95.0000</text><rect x="1012" y="541" width="4" height="1" fill="#FF0000"/><text x="1016" y="545.5" font-size="11" fill="#000" textLength="39.3" lengthAdjust="spacingAndGlyphs">94.5000</text><rect x="1012" y="562" width="4" height="1" fill="#FF0000"/><text x="1016" y="566.5" font-size="11" fill="#000" textLength="39.3" lengthAdjust="spacingAndGlyphs">94.0000</text><rect x="1012" y="583" width="4" height="1" fill="#FF0000"/><text x="1016" y="587.5" font-size="11" fill="#000" textLength="39.3" lengthAdjust="spacingAndGlyphs">93.5000</text><rect x="1012" y="603" width="4" height="1" fill="#FF0000"/><text x="1016" y="607.5" font-size="11" fill="#000" textLength="39.3" lengthAdjust="spacingAndGlyphs">93.0000</text><rect x="1012" y="624" width="4" height="1" fill="#FF0000"/><text x="1016" y="628.5" font-size="11" fill="#000" textLength="39.3" lengthAdjust="spacingAndGlyphs">92.5000</text><rect x="1012" y="645" width="4" height="1" fill="#FF0000"/><text x="1016" y="649.5" font-size="11" fill="#000" textLength="39.3" lengthAdjust="spacingAndGlyphs">92.0000</text><rect x="1012" y="666" width="4" height="1" fill="#FF0000"/><text x="1016" y="670.5" font-size="11" fill="#000" textLength="39.3" lengthAdjust="spacingAndGlyphs">91.5000</text><rect x="1012" y="686" width="4" height="1" fill="#FF0000"/><text x="1016" y="690.5" font-size="11" fill="#000" textLength="39.3" lengthAdjust="spacingAndGlyphs">91.0000</text><rect x="1014.5" y="237.5" width="50" height="12" fill="#FFFFFF" stroke="#FF0000" stroke-width="1"/><text x="1017" y="247.5" font-size="11" fill="#0000FF" textLength="44" lengthAdjust="spacingAndGlyphs">101.6800</text><rect x="37" y="687" width="1" height="2" fill="#FF0000"/><text x="36.5" y="701" font-size="11" fill="#000" text-anchor="middle">04</text><rect x="69" y="687" width="1" height="2" fill="#FF0000"/><text x="68.5" y="701" font-size="11" fill="#000" text-anchor="middle">11</text><rect x="101" y="687" width="1" height="2" fill="#FF0000"/><text x="100.5" y="701" font-size="11" fill="#000" text-anchor="middle">18</text><rect x="133" y="687" width="1" height="2" fill="#FF0000"/><text x="132.5" y="701" font-size="11" fill="#000" text-anchor="middle">25</text><rect x="166" y="687" width="1" height="2" fill="#FF0000"/><text x="165.5" y="701" font-size="11" fill="#000" text-anchor="middle">02</text><rect x="198" y="687" width="1" height="2" fill="#FF0000"/><text x="197.5" y="701" font-size="11" fill="#000" text-anchor="middle">09</text><rect x="230" y="687" width="1" height="2" fill="#FF0000"/><text x="229.5" y="701" font-size="11" fill="#000" text-anchor="middle">16</text><rect x="262" y="687" width="1" height="2" fill="#FF0000"/><text x="261.5" y="701" font-size="11" fill="#000" text-anchor="middle">23</text><rect x="287" y="687" width="1" height="2" fill="#FF0000"/><text x="286.5" y="701" font-size="11" fill="#000" text-anchor="middle">30</text><rect x="313" y="687" width="1" height="2" fill="#FF0000"/><text x="312.5" y="701" font-size="11" fill="#000" text-anchor="middle">06</text><rect x="345" y="687" width="1" height="2" fill="#FF0000"/><text x="344.5" y="701" font-size="11" fill="#000" text-anchor="middle">13</text><rect x="377" y="687" width="1" height="2" fill="#FF0000"/><text x="376.5" y="701" font-size="11" fill="#000" text-anchor="middle">20</text><rect x="409" y="687" width="1" height="2" fill="#FF0000"/><text x="408.5" y="701" font-size="11" fill="#000" text-anchor="middle">27</text><rect x="441" y="687" width="1" height="2" fill="#FF0000"/><text x="440.5" y="701" font-size="11" fill="#000" text-anchor="middle">03</text><rect x="474" y="687" width="1" height="2" fill="#FF0000"/><text x="473.5" y="701" font-size="11" fill="#000" text-anchor="middle">10</text><rect x="506" y="687" width="1" height="2" fill="#FF0000"/><text x="505.5" y="701" font-size="11" fill="#000" text-anchor="middle">17</text><rect x="538" y="687" width="1" height="2" fill="#FF0000"/><text x="537.5" y="701" font-size="11" fill="#000" text-anchor="middle">24</text><rect x="570" y="687" width="1" height="2" fill="#FF0000"/><text x="569.5" y="701" font-size="11" fill="#000" text-anchor="middle">03</text><rect x="602" y="687" width="1" height="2" fill="#FF0000"/><text x="601.5" y="701" font-size="11" fill="#000" text-anchor="middle">10</text><rect x="634" y="687" width="1" height="2" fill="#FF0000"/><text x="633.5" y="701" font-size="11" fill="#000" text-anchor="middle">17</text><rect x="666" y="687" width="1" height="2" fill="#FF0000"/><text x="665.5" y="701" font-size="11" fill="#000" text-anchor="middle">24</text><rect x="698" y="687" width="1" height="2" fill="#FF0000"/><text x="697.5" y="701" font-size="11" fill="#000" text-anchor="middle">31</text><rect x="730" y="687" width="1" height="2" fill="#FF0000"/><text x="729.5" y="701" font-size="11" fill="#000" text-anchor="middle">07</text><rect x="762" y="687" width="1" height="2" fill="#FF0000"/><text x="761.5" y="701" font-size="11" fill="#000" text-anchor="middle">14</text><rect x="788" y="687" width="1" height="2" fill="#FF0000"/><text x="787.5" y="701" font-size="11" fill="#000" text-anchor="middle">21</text><rect x="820" y="687" width="1" height="2" fill="#FF0000"/><text x="819.5" y="701" font-size="11" fill="#000" text-anchor="middle">28</text><rect x="852" y="687" width="1" height="2" fill="#FF0000"/><text x="851.5" y="701" font-size="11" fill="#000" text-anchor="middle">05</text><rect x="884" y="687" width="1" height="2" fill="#FF0000"/><text x="883.5" y="701" font-size="11" fill="#000" text-anchor="middle">12</text><rect x="921" y="687" width="1" height="2" fill="#FF0000"/><text x="920.5" y="701" font-size="11" fill="#000" text-anchor="middle">19</text><rect x="953" y="687" width="1" height="2" fill="#FF0000"/><text x="952.5" y="701" font-size="11" fill="#000" text-anchor="middle">26</text><rect x="985" y="687" width="1" height="2" fill="#FF0000"/><text x="984.5" y="701" font-size="11" fill="#000" text-anchor="middle">02</text><text x="36.5" y="716" font-size="11" fill="#000" text-anchor="middle" textLength="49" lengthAdjust="spacingAndGlyphs">Nov/04/13</text><text x="165.5" y="716" font-size="11" fill="#000" text-anchor="middle" textLength="34.5" lengthAdjust="spacingAndGlyphs">Dec/02</text><text x="312.5" y="716" font-size="11" fill="#000" text-anchor="middle" textLength="47" lengthAdjust="spacingAndGlyphs">Jan/06/14</text><text x="440.5" y="716" font-size="11" fill="#000" text-anchor="middle" textLength="34.5" lengthAdjust="spacingAndGlyphs">Feb/03</text><text x="569.5" y="716" font-size="11" fill="#000" text-anchor="middle" textLength="34.5" lengthAdjust="spacingAndGlyphs">Mar/03</text><text x="729.5" y="716" font-size="11" fill="#000" text-anchor="middle" textLength="34.5" lengthAdjust="spacingAndGlyphs">Apr/07</text><text x="851.5" y="716" font-size="11" fill="#000" text-anchor="middle" textLength="35" lengthAdjust="spacingAndGlyphs">May/05</text><text x="984.5" y="716" font-size="11" fill="#000" text-anchor="middle" textLength="32" lengthAdjust="spacingAndGlyphs">Jun/02</text><rect x="12" y="733" width="12" height="11" fill="#3B6EA8" stroke="#2A5080" stroke-width="0.8"/><rect x="26" y="729" width="1" height="21" fill="#A0A0A0"/><rect x="30.5" y="728.5" width="149" height="21" fill="#FFFFFF" stroke="#ABADB3" stroke-width="1"/><circle cx="39.5" cy="737" r="3.3" stroke="#333" stroke-width="1.3" fill="none"/><path d="M37 739.5 L34 743" stroke="#333" stroke-width="1.6"/><path d="M40 743.5 h1 M42.5 743.5 h1 M45 743.5 h1" stroke="#333" stroke-width="1.2"/><text x="51.5" y="743" font-size="11" fill="#6D6D6D" textLength="103" lengthAdjust="spacingAndGlyphs">Search for instrument</text><rect x="198" y="729" width="1" height="21" fill="#A0A0A0"/><text x="202.5" y="744" font-size="12" font-weight="bold" fill="#111" textLength="146" lengthAdjust="spacingAndGlyphs">15 May 2014 19:00:00 EDT</text></svg></body></html>
